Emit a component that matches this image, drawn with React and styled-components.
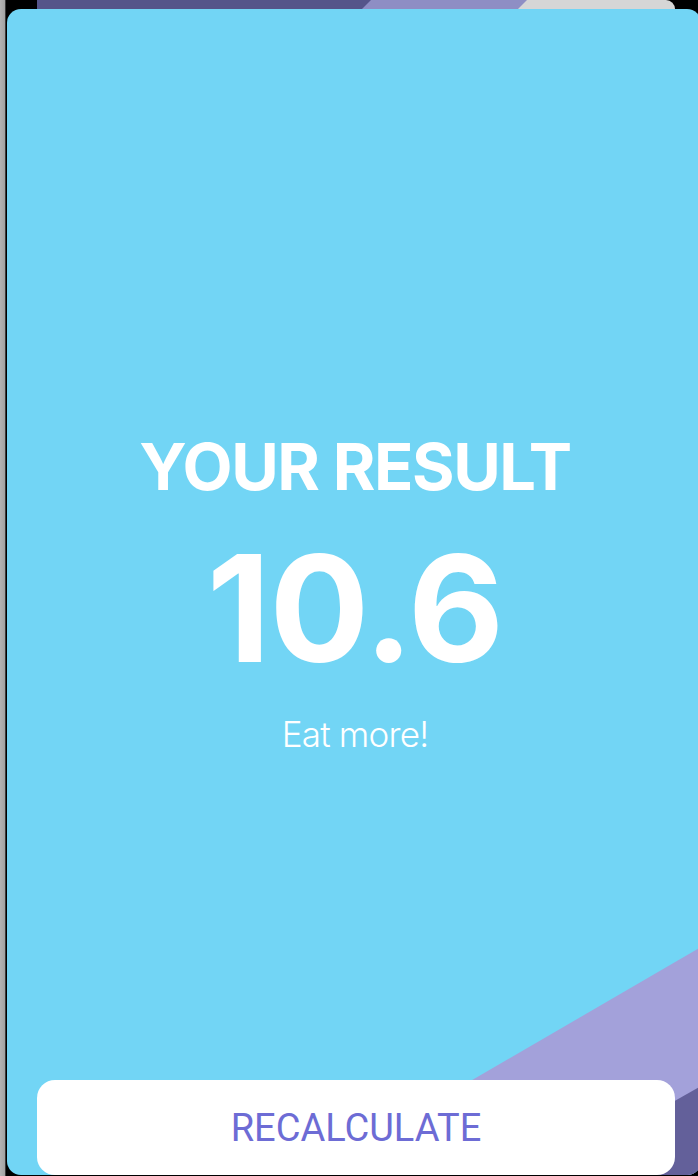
import React from "react";
import styled, { createGlobalStyle } from "styled-components";

const Global = createGlobalStyle`
    html, body {
        margin: 0;
        padding: 0;
        background: #000;
    }
    * {
        box-sizing: border-box;
    }
`;

const Screen = styled.div`
    width: 698px;
    height: 1176px;
    display: flex;
    overflow: hidden;
    background: #000;
`;

const SideStrip = styled.div`
    width: 6px;
    flex-shrink: 0;
    background: linear-gradient(to right, #b4b4b4, #a2a2a2);
    border-right: 1px solid #3a3a3a;
`;

const Stack = styled.div`
    flex: 1;
    display: flex;
    flex-direction: column;
    min-width: 0;
`;

const BackSheet = styled.div`
    height: 9px;
    flex-shrink: 0;
    margin-left: 31px;
    width: 638px;
    overflow: hidden;
    border-top-right-radius: 10px;
    svg {
        display: block;
    }
`;

const Card = styled.div`
    position: relative;
    margin-left: 1px;
    width: 694px;
    height: 1166px;
    flex-shrink: 0;
    border-radius: 14px;
    background: #72d5f5;
    overflow: hidden;
    display: flex;
    flex-direction: column;
    font-family: Inter, "Noto Sans", sans-serif;
    color: #fff;
`;

const Corner = styled.svg`
    position: absolute;
    right: 0;
    bottom: 0;
`;

const Content = styled.div`
    position: relative;
    flex: 1;
    display: flex;
    flex-direction: column;
    align-items: center;
    padding-top: 425px;
    padding-left: 2px;
`;

const Title = styled.h1`
    margin: 0;
    font-size: 65px;
    line-height: 1;
    font-weight: 700;
    letter-spacing: -1.4px;
`;

const Score = styled.div`
    margin-top: 36px;
    font-size: 148px;
    line-height: 1;
    font-weight: 700;
    letter-spacing: -1px;
`;

const Verdict = styled.p`
    margin: 34px 0 0;
    font-size: 35px;
    line-height: 1;
    font-weight: 300;
    letter-spacing: -0.8px;
`;

const Recalculate = styled.button`
    position: relative;
    height: 95px;
    margin: 0 26px 0 30px;
    flex-shrink: 0;
    border: none;
    border-radius: 18px;
    background: #fff;
    color: #6d6cd5;
    font-family: Roboto, "Liberation Sans", sans-serif;
    font-size: 38px;
    font-weight: 400;
    cursor: pointer;
`;

export default function App() {
    return (
        <>
            <Global />
            <Screen>
                <SideStrip />
                <Stack>
                    <BackSheet>
                        <svg width="638" height="9" viewBox="0 0 638 9">
                            <rect width="638" height="9" fill="#d6d6d6" />
                            <polygon points="0,0 490,0 481,9 0,9" fill="#8e8ec4" />
                            <polygon points="0,0 334,0 325,9 0,9" fill="#55558a" />
                        </svg>
                    </BackSheet>
                    <Card>
                        <Corner width="400" height="240" viewBox="0 0 400 240">
                            <polygon points="400,12 400,240 8,240" fill="#a3a1da" />
                            <polygon points="400,151 400,240 243,240" fill="#63609a" />
                        </Corner>
                        <Content>
                            <Title>YOUR RESULT</Title>
                            <Score>10.6</Score>
                            <Verdict>Eat more!</Verdict>
                        </Content>
                        <Recalculate>RECALCULATE</Recalculate>
                    </Card>
                </Stack>
            </Screen>
        </>
    );
}
